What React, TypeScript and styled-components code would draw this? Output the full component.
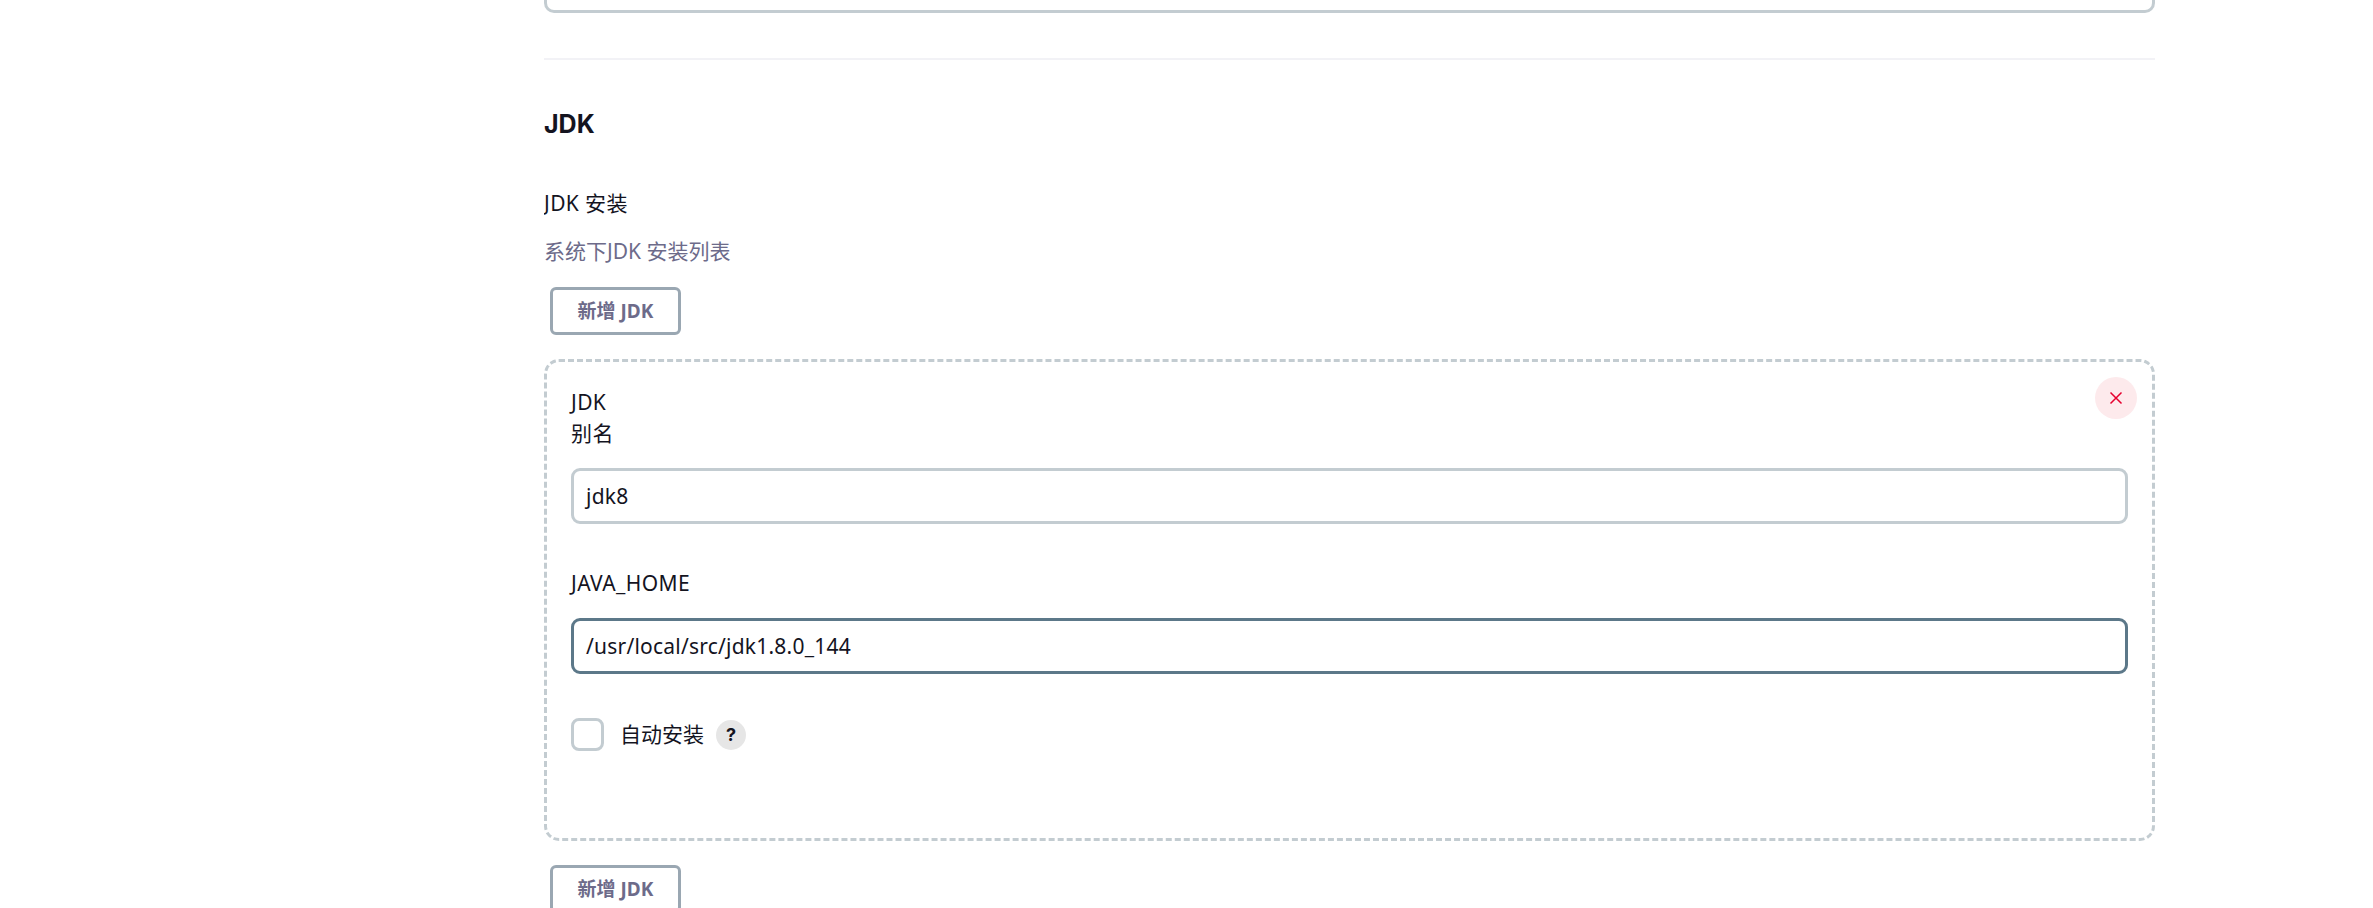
import styled, { createGlobalStyle } from "styled-components";

const GlobalStyle = createGlobalStyle`
  html, body {
    margin: 0;
    padding: 0;
    background: #fff;
    overflow: hidden;
  }
  body {
    font-family: "Noto Sans", "Noto Sans CJK SC", sans-serif;
    font-size: 21px;
    color: #14141f;
  }
`;

const Page = styled.main`
  width: 1611px;
  height: 908px;
  margin-left: 544px;
  overflow: hidden;
`;

const ClippedBox = styled.div`
  height: 10px;
  border: 3px solid #c3ccd1;
  border-top: none;
  border-radius: 0 0 10px 10px;
`;

const Divider = styled.hr`
  height: 2px;
  margin: 45px 0 0;
  border: none;
  background: #f2f2f6;
`;

const SectionTitle = styled.h2`
  margin: 47px 0 0;
  font-family: Inter, "Noto Sans CJK SC", sans-serif;
  font-size: 25px;
  line-height: 34px;
  font-weight: 700;
`;

const Label = styled.div`
  font-size: 21px;
  line-height: 32px;
  letter-spacing: 0.4px;
`;

const SectionLabel = styled(Label)`
  margin-top: 46px;
`;

const Description = styled.div`
  margin-top: 16px;
  font-size: 21px;
  line-height: 32px;
  color: #6d6b8a;
`;

const AddButton = styled.button`
  display: block;
  box-sizing: border-box;
  width: 131px;
  height: 48px;
  margin-left: 6px;
  padding: 0 0 2px;
  background: #fff;
  border: 3px solid #9aa7b2;
  border-radius: 6px;
  font-family: inherit;
  font-size: 19px;
  font-weight: 700;
  color: #6d6b8a;
`;

const TopAddButton = styled(AddButton)`
  margin-top: 20px;
`;

const BottomAddButton = styled(AddButton)`
  margin-top: 24px;
`;

const Repeated = styled.section`
  position: relative;
  box-sizing: border-box;
  height: 482px;
  margin-top: 24px;
  padding: 25px 24px 0;
  border: 3px dashed #c3ccd1;
  border-radius: 15px;
`;

const CloseButton = styled.button`
  position: absolute;
  top: 15px;
  right: 15px;
  display: flex;
  align-items: center;
  justify-content: center;
  width: 42px;
  height: 42px;
  padding: 0;
  border: none;
  border-radius: 50%;
  background: #fdeaec;
`;

const StackedLabel = styled(Label)`
  line-height: 31px;
`;

const Field = styled.div<{ $focused?: boolean }>`
  box-sizing: border-box;
  height: 56px;
  margin-top: 19px;
  padding: 0 12px;
  display: flex;
  align-items: center;
  border: 3px solid ${(p) => (p.$focused ? "#5c7889" : "#c3ccd1")};
  border-radius: 9px;
  font-size: 21px;
  letter-spacing: 0.22px;
`;

const FieldLabel = styled(Label)`
  margin-top: 43px;
`;

const CheckRow = styled.div`
  display: flex;
  align-items: center;
  margin-top: 44px;
`;

const CheckBox = styled.span`
  box-sizing: border-box;
  width: 33px;
  height: 33px;
  border: 3px solid #c3ccd1;
  border-radius: 8px;
`;

const CheckLabel = styled.span`
  margin-left: 16px;
  line-height: 33px;
`;

const HelpBadge = styled.span`
  display: flex;
  align-items: center;
  justify-content: center;
  width: 30px;
  height: 30px;
  margin-left: 12px;
  border-radius: 50%;
  background: #e6e6e6;
  font-family: Inter, sans-serif;
  font-size: 18px;
  font-weight: 700;
`;

const CloseIcon = () => (
  <svg width="14" height="14" viewBox="0 0 14 14" fill="none" stroke="#e6002e" strokeWidth="1.5">
    <path d="M1.5 1.5 12.5 12.5M12.5 1.5 1.5 12.5" />
  </svg>
);

export default function App() {
  return (
    <>
      <GlobalStyle />
      <Page>
        <ClippedBox />
        <Divider />
        <SectionTitle>JDK</SectionTitle>
        <SectionLabel>JDK 安装</SectionLabel>
        <Description>系统下JDK 安装列表</Description>
        <TopAddButton>新增 JDK</TopAddButton>
        <Repeated>
          <CloseButton aria-label="删除">
            <CloseIcon />
          </CloseButton>
          <StackedLabel>JDK</StackedLabel>
          <StackedLabel>别名</StackedLabel>
          <Field>jdk8</Field>
          <FieldLabel>JAVA_HOME</FieldLabel>
          <Field $focused>/usr/local/src/jdk1.8.0_144</Field>
          <CheckRow>
            <CheckBox />
            <CheckLabel>自动安装</CheckLabel>
            <HelpBadge>?</HelpBadge>
          </CheckRow>
        </Repeated>
        <BottomAddButton>新增 JDK</BottomAddButton>
      </Page>
    </>
  );
}
